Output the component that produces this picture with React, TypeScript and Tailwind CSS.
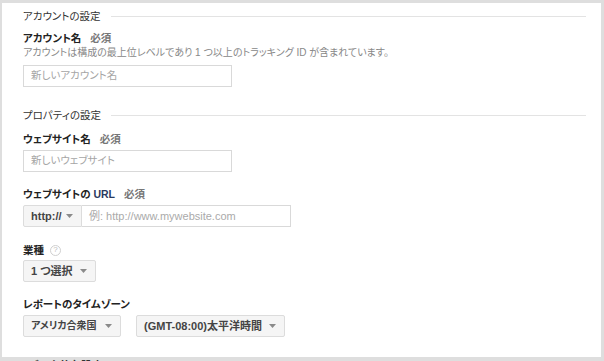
import React from "react";

function Caret() {
  return (
    <svg width="7" height="4" viewBox="0 0 7 4" className="shrink-0">
      <polygon points="0,0 7,0 3.5,4" fill="#8a8a8a" />
    </svg>
  );
}

function SelectButton({ label, className }: { label: string; className: string }) {
  return (
    <div
      className={`flex h-[22px] shrink-0 items-center justify-between whitespace-nowrap rounded-[2px] border border-[#dcdcdc] bg-[#f5f5f5] pl-[7px] pr-[8px] font-bold text-[#444] ${className}`}
    >
      <span className="leading-none">{label}</span>
      <Caret />
    </div>
  );
}

function SectionTitle({ children, className }: { children: React.ReactNode; className: string }) {
  return (
    <div className={`flex h-4 shrink-0 items-center gap-[10px] ${className}`}>
      <span className="whitespace-nowrap text-[10.5px] leading-4 text-[#333]">{children}</span>
      <div className="h-px flex-1 bg-[#e3e3e3]" />
    </div>
  );
}

function FieldLabel({ children, required, className }: { children: React.ReactNode; required?: boolean; className: string }) {
  return (
    <div className={`flex h-4 shrink-0 items-center gap-[9px] overflow-hidden whitespace-nowrap text-[10.5px] font-bold leading-4 ${className}`}>
      <span className="text-[#222]">{children}</span>
      {required && <span className="text-[#777]">必須</span>}
    </div>
  );
}

function HelpIcon() {
  return (
    <span className="flex h-[11px] w-[11px] items-center justify-center rounded-full border border-[#cfcfcf] text-[8px] font-normal leading-none text-[#bbb]">
      ?
    </span>
  );
}

export default function App() {
  return (
    <div className="flex h-[361px] w-[604px] flex-col overflow-hidden bg-[#dedede] font-['Liberation_Sans','Noto_Sans_CJK_JP',sans-serif] [font-feature-settings:'palt']">
      <div className="ml-[2px] mt-[3px] flex h-[354px] w-[599px] shrink-0 flex-col bg-white pl-[21px] pr-[15px]">
        <SectionTitle className="mt-[5px]">アカウントの設定</SectionTitle>

        <FieldLabel required className="mt-[6px]">アカウント名</FieldLabel>
        <p className="h-[14px] shrink-0 overflow-hidden whitespace-nowrap text-[10px] leading-[14px] text-[#888]">
          アカウントは構成の最上位レベルであり 1 つ以上のトラッキング ID が含まれています。
        </p>
        <div className="mt-[5px] flex h-[22px] w-[209px] shrink-0 items-center border border-[#d9d9d9] bg-white pl-[7px] text-[10.5px] text-[#a5a5a5]">
          新しいアカウント名
        </div>

        <SectionTitle className="mt-[20px]">プロパティの設定</SectionTitle>

        <FieldLabel required className="mt-[8px]">ウェブサイト名</FieldLabel>
        <div className="mt-[3px] flex h-[22px] w-[209px] shrink-0 items-center border border-[#d9d9d9] bg-white pl-[7px] text-[10.5px] text-[#a5a5a5]">
          新しいウェブサイト
        </div>

        <FieldLabel required className="mt-[14px]">
          ウェブサイトの <span className="text-[#2a3a5e]">URL</span>
        </FieldLabel>
        <div className="mt-[3px] flex h-[22px] shrink-0">
          <SelectButton label="http://" className="w-[59px] rounded-r-none text-[11px]" />
          <div className="flex w-[209px] items-center whitespace-nowrap border border-l-0 border-[#d9d9d9] bg-white pl-[7px] text-[11px] text-[#aaa]">
            例: http://www.mywebsite.com
          </div>
        </div>

        <div className="mt-[15px] flex h-4 shrink-0 items-center gap-[6px] text-[10.5px] font-bold leading-4 text-[#222]">
          <span>業種</span>
          <HelpIcon />
        </div>
        <SelectButton label="1 つ選択" className="mt-[2px] w-[73px] text-[11px]" />

        <FieldLabel className="mt-[14px]">レポートのタイムゾーン</FieldLabel>
        <div className="mt-[3px] flex h-[22px] shrink-0 gap-[15px]">
          <SelectButton label="アメリカ合衆国" className="w-[98px] text-[10px]" />
          <SelectButton label="(GMT-08:00)太平洋時間" className="w-[149px] text-[11px]" />
        </div>
      </div>
      <div className="flex items-center gap-[6px] pl-[28px] pt-px text-[11px] font-bold leading-4 text-[#333]">
        <span>データ共有設定</span>
        <HelpIcon />
      </div>
    </div>
  );
}
